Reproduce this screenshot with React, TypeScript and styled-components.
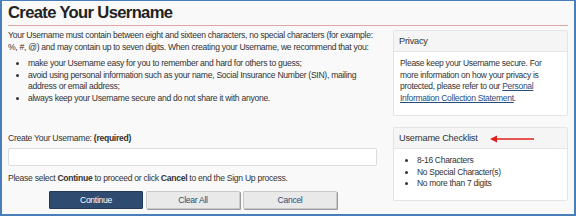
import React from "react";
import styled, { createGlobalStyle } from "styled-components";

const Global = createGlobalStyle`
  html, body { margin: 0; padding: 0; }
  body { font-family: "Liberation Sans", Arial, sans-serif; background: #fff; }
`;

const Frame = styled.div`
  box-sizing: border-box;
  width: 576px;
  height: 216px;
  border: 2px solid #4a7ebb;
  border-top-width: 1px;
  background: #f9f9f9;
  padding: 0 6px 0 6px;
  overflow: hidden;
  color: #333;
`;

const Title = styled.h1`
  margin: 0;
  padding: 1px 0 1px 0;
  font-size: 16.6px;
  line-height: 22px;
  font-weight: bold;
  letter-spacing: -0.65px;
  color: #222;
  border-bottom: 1px solid #e3a6a6;
`;

const Columns = styled.div`
  display: flex;
  gap: 16px;
  align-items: flex-start;
`;

const Main = styled.div`
  width: 369px;
  flex: none;
  font-size: 8.6px;
  line-height: 11.5px;
  letter-spacing: -0.29px;
`;

const Side = styled.div`
  flex: 1;
  padding-top: 4px;
  display: flex;
  flex-direction: column;
  gap: 11px;
`;

const Para = styled.p`
  margin: 4px 0 5px 0;
`;

const Bullets = styled.ul`
  margin: 0;
  padding-left: 20px;
`;

const Label = styled.div`
  margin-top: 29px;
`;

const Input = styled.input`
  display: block;
  box-sizing: border-box;
  width: 369px;
  height: 18px;
  margin-top: 3px;
  border: 1px solid #dcdcdc;
  border-radius: 2px;
  background: #fff;
  outline: none;
`;

const Note = styled.div`
  margin-top: 7px;
`;

const ButtonRow = styled.div`
  display: flex;
  gap: 3px;
  margin-top: 7px;
  padding-left: 41px;
`;

const Button = styled.button<{ $primary?: boolean }>`
  box-sizing: border-box;
  width: 94px;
  height: 18px;
  font-family: inherit;
  font-size: 8.6px;
  letter-spacing: -0.3px;
  border-radius: 1px;
  border: 1px solid ${(p) => (p.$primary ? "#23395a" : "#c9c9c9")};
  background: ${(p) => (p.$primary ? "#2f4b70" : "#e9e9ea")};
  color: ${(p) => (p.$primary ? "#fff" : "#2f4b70")};
  box-shadow: ${(p) => (p.$primary ? "none" : "1px 1px 0 #9a9a9a")};
  padding: 0;
`;

const Panel = styled.div`
  background: #fff;
  border: 1px solid #e4e4e4;
  border-radius: 2px;
`;

const PanelHead = styled.div`
  position: relative;
  background: #f5f5f5;
  border-bottom: 1px solid #e6e6e6;
  height: 20px;
  line-height: 20px;
  padding: 0 5px;
  font-size: 9.2px;
  letter-spacing: -0.2px;
  color: #333;
`;

const PanelBody = styled.div<{ $bottom?: number }>`
  padding: 6px 10px ${(p) => p.$bottom ?? 10}px 6px;
  font-size: 8.5px;
  line-height: 11.7px;
  letter-spacing: -0.3px;
`;

const Link = styled.a`
  color: #2b4c7e;
  text-decoration: underline;
`;

const CheckList = styled.ul`
  margin: 0;
  padding-left: 17px;
`;

const Arrow = styled.svg`
  position: absolute;
  left: 96px;
  top: 7px;
`;

export default function App() {
  return (
    <>
      <Global />
      <Frame>
        <Title>Create Your Username</Title>
        <Columns>
          <Main>
            <Para>
              Your Username must contain between eight and sixteen characters, no special characters (for example:
              %, #, @) and may contain up to seven digits. When creating your Username, we recommend that you:
            </Para>
            <Bullets>
              <li>make your Username easy for you to remember and hard for others to guess;</li>
              <li>avoid using personal information such as your name, Social Insurance Number (SIN), mailing address or email address;</li>
              <li>always keep your Username secure and do not share it with anyone.</li>
            </Bullets>
            <Label>
              Create Your Username: <b>(required)</b>
            </Label>
            <Input type="text" />
            <Note>
              Please select <b>Continue</b> to proceed or click <b>Cancel</b> to end the Sign Up process.
            </Note>
            <ButtonRow>
              <Button $primary>Continue</Button>
              <Button>Clear All</Button>
              <Button>Cancel</Button>
            </ButtonRow>
          </Main>
          <Side>
            <Panel>
              <PanelHead>Privacy</PanelHead>
              <PanelBody>
                Please keep your Username secure. For more information on how your privacy is protected, please refer to our{" "}
                <Link href="#">Personal Information Collection Statement</Link>.
              </PanelBody>
            </Panel>
            <Panel>
              <PanelHead>
                Username Checklist
                <Arrow width="44" height="8" viewBox="0 0 44 8">
                  <line x1="4" y1="4" x2="44" y2="4" stroke="#e0201c" strokeWidth="1.6" />
                  <polygon points="0,4 7,0.5 7,7.5" fill="#e0201c" />
                </Arrow>
              </PanelHead>
              <PanelBody $bottom={10}>
                <CheckList>
                  <li>8-16 Characters</li>
                  <li>No Special Character(s)</li>
                  <li>No more than 7 digits</li>
                </CheckList>
              </PanelBody>
            </Panel>
          </Side>
        </Columns>
      </Frame>
    </>
  );
}
